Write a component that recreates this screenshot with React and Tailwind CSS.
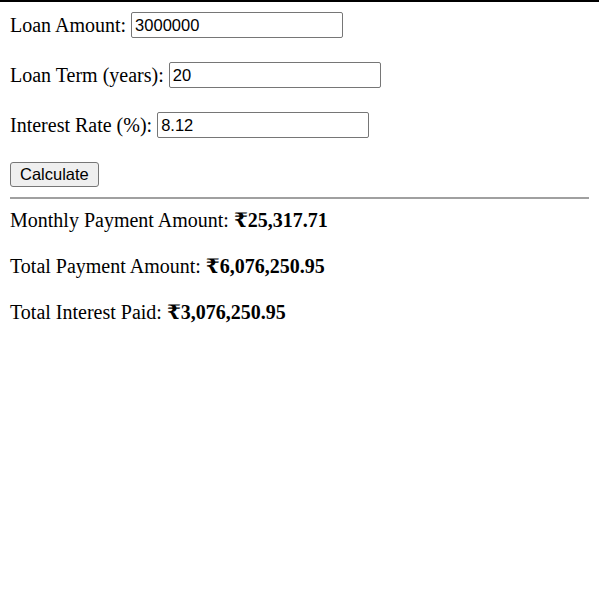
import React, { useState } from 'react';

const Field = ({ label, value, onChange }) => (
  <div className="flex items-center h-[26px]">
    <label className="whitespace-pre">{label} </label>
    <input
      type="text"
      value={value}
      onChange={(e) => onChange(e.target.value)}
      className="w-[212px] h-[26px] px-[3px] border border-[#767676] rounded-[2px] bg-white text-[16.5px] text-black outline-none"
      style={{ fontFamily: '"Liberation Sans", Arial, sans-serif' }}
    />
  </div>
);

const fmt = (n) =>
  '₹' + n.toLocaleString('en-US', { minimumFractionDigits: 2, maximumFractionDigits: 2 });

export default function App() {
  const [amount, setAmount] = useState('3000000');
  const [term, setTerm] = useState('20');
  const [rate, setRate] = useState('8.12');
  const [result, setResult] = useState(() => calc('3000000', '20', '8.12'));

  function calc(a, t, r) {
    const P = parseFloat(a);
    const n = parseFloat(t) * 12;
    const i = parseFloat(r) / 100 / 12;
    const m = (P * i * Math.pow(1 + i, n)) / (Math.pow(1 + i, n) - 1);
    return { monthly: m, total: m * n, interest: m * n - P };
  }

  return (
    <div
      className="min-h-[600px] bg-white border-t-2 border-black px-[10px] pt-[10px] text-[20px] text-black"
      style={{ fontFamily: '"Liberation Serif", "Times New Roman", "DejaVu Serif", serif' }}
    >
      <div className="flex flex-col gap-[24px]">
        <Field label="Loan Amount:" value={amount} onChange={setAmount} />
        <Field label="Loan Term (years):" value={term} onChange={setTerm} />
        <Field label="Interest Rate (%):" value={rate} onChange={setRate} />
        <div className="flex">
          <button
            onClick={() => setResult(calc(amount, term, rate))}
            className="h-[25px] px-[9px] bg-[#efefef] border border-[#767676] rounded-[3px] text-[16.5px] leading-none text-black"
            style={{ fontFamily: '"Liberation Sans", Arial, sans-serif' }}
          >
            Calculate
          </button>
        </div>
      </div>
      <hr className="mt-[10px] border-0 border-t-2 border-[#a0a0a0]" />
      <div className="flex flex-col gap-[23px] mt-[10px] leading-[23px]">
        <p>Monthly Payment Amount: <b>{fmt(result.monthly)}</b></p>
        <p>Total Payment Amount: <b>{fmt(result.total)}</b></p>
        <p>Total Interest Paid: <b>{fmt(result.interest)}</b></p>
      </div>
    </div>
  );
}
